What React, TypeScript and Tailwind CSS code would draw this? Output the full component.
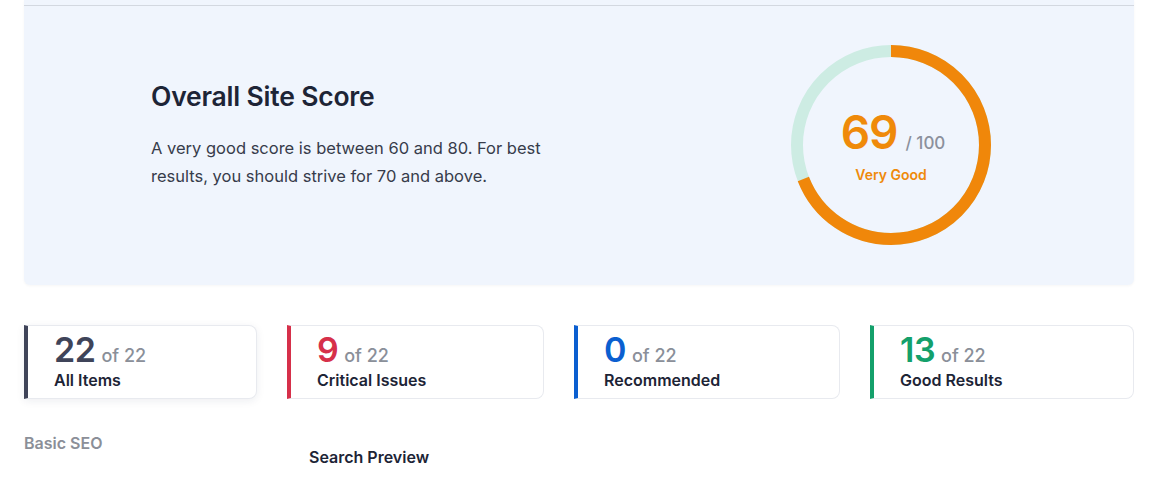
import React from "react";

export default function App() {
  const cards = [
    { n: "22", label: "All Items", bar: "border-l-[#3f4459]", num: "text-[#3f4459]", w: "w-[233px]", active: true },
    { n: "9", label: "Critical Issues", bar: "border-l-[#d6304a]", num: "text-[#d6304a]", w: "w-[257px]", active: false },
    { n: "0", label: "Recommended", bar: "border-l-[#0b5fd0]", num: "text-[#0b5fd0]", w: "w-[266px]", active: false },
    { n: "13", label: "Good Results", bar: "border-l-[#14a06b]", num: "text-[#14a06b]", w: "w-[264px]", active: false },
  ];

  const r = 94;
  const c = 2 * Math.PI * r;

  return (
    <div className="w-[1150px] h-[480px] bg-white font-['Inter',sans-serif] overflow-hidden">
      <div className="ml-[24px] w-[1110px] h-[285px] bg-[#f0f5fd] rounded-b-[6px] shadow-[0_1px_3px_rgba(0,0,0,0.04)]">
        <div className="h-[5px]" />
        <div className="border-t border-[#d3d8e0] flex items-center h-[280px]">
          <div className="ml-[127px] w-[405px] -mt-[22px]">
            <h2 className="text-[26.5px] font-semibold text-[#1d2436] leading-[32px] tracking-[-0.2px]">Overall Site Score</h2>
            <p className="mt-[22px] text-[16.5px] leading-[28px] text-[#373c4b]">
              A very good score is between 60 and 80. For best results, you should strive for 70 and above.
            </p>
          </div>
          <div className="ml-auto mr-[143px] -mt-[1px] relative w-[200px] h-[200px]">
            <svg width="200" height="200" viewBox="0 0 200 200">
              <circle cx="100" cy="100" r={r} fill="none" stroke="#cdece3" strokeWidth="12" />
              <circle
                cx="100"
                cy="100"
                r={r}
                fill="none"
                stroke="#f0870a"
                strokeWidth="12"
                strokeDasharray={`${c * 0.69} ${c}`}
                transform="rotate(-90 100 100)"
              />
            </svg>
            <div className="absolute inset-0 flex flex-col items-center justify-center pl-[4px]">
              <div className="flex items-baseline mt-[4px]">
                <span className="text-[46px] font-semibold text-[#ef8a0a] leading-none tracking-[-1px]">69</span>
                <span className="ml-[8px] text-[17px] text-[#8b909c] font-medium">/ 100</span>
              </div>
              <span className="mt-[8px] text-[14px] font-semibold text-[#ef8a0a] -ml-[4px]">Very Good</span>
            </div>
          </div>
        </div>
      </div>

      <div className="ml-[24px] mt-[40px] flex gap-[30px]">
        {cards.map((card, i) => (
          <div
            key={i}
            className={`${card.w} h-[74px] bg-white border border-[#e8eaef] border-l-4 ${card.bar} rounded-r-[8px] pl-[26px] pt-[4px] ${
              card.active ? "shadow-[0_2px_8px_rgba(30,40,80,0.08)]" : ""
            }`}
          >
            <div className="flex items-baseline">
              <span className={`text-[34px] font-semibold leading-[40px] tracking-[-0.5px] ${card.num}`}>{card.n}</span>
              <span className="ml-[6px] text-[18px] font-medium text-[#8a8f99]">of 22</span>
            </div>
            <div className="text-[16px] font-semibold text-[#1d2436] leading-[20px]">{card.label}</div>
          </div>
        ))}
      </div>

      <div className="ml-[24px] mt-[34px] text-[16px] font-semibold text-[#8b8f98] leading-[20px]">Basic SEO</div>
      <div className="ml-[309px] -mt-[6px] text-[16px] font-semibold text-[#1d2436] leading-[20px]">Search Preview</div>
    </div>
  );
}
